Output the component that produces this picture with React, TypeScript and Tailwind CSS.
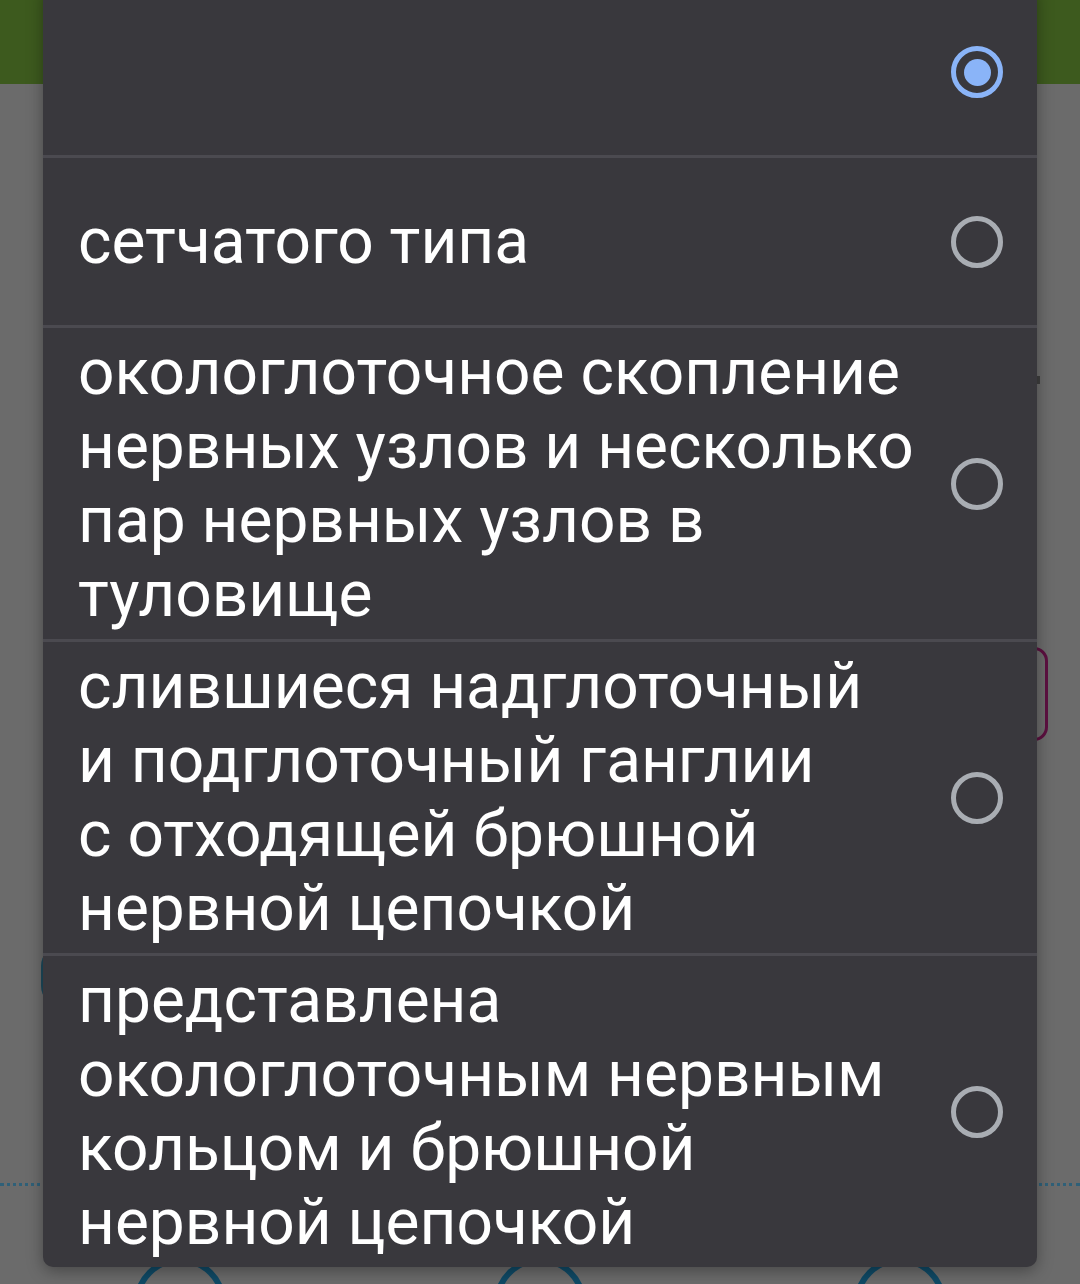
import React from 'react';

type Option = {
  id: number;
  lines: string[];
};

const options: Option[] = [
  { id: 0, lines: [] },
  { id: 1, lines: ['сетчатого типа'] },
  {
    id: 2,
    lines: ['окологлоточное скопление', 'нервных узлов и несколько', 'пар нервных узлов в', 'туловище'],
  },
  {
    id: 3,
    lines: ['слившиеся надглоточный', 'и подглоточный ганглии', 'с отходящей брюшной', 'нервной цепочкой'],
  },
  {
    id: 4,
    lines: ['представлена', 'окологлоточным нервным', 'кольцом и брюшной', 'нервной цепочкой'],
  },
];

const Radio: React.FC<{ checked: boolean }> = ({ checked }) =>
  checked ? (
    <div className="w-[52px] h-[52px] shrink-0 rounded-full border-[5px] border-[#8ab4f8] flex items-center justify-center">
      <div className="w-[27px] h-[27px] rounded-full bg-[#8ab4f8]" />
    </div>
  ) : (
    <div className="w-[52px] h-[52px] shrink-0 rounded-full border-[5px] border-[#a9adb3]" />
  );

const App: React.FC = () => {
  const selected = 0;

  return (
    <div className="relative w-[1080px] h-[1284px] overflow-hidden bg-[#6b6b6b] font-['Roboto',sans-serif]">
      {/* Page behind the dialog (dimmed) */}
      <div className="h-[84px] bg-[#3d5a1e]" />
      <div className="h-[292px]" />
      <div className="h-[8px] w-[5px] ml-[1035px] bg-[#3f3f3f]" />
      <div className="h-[263px]" />
      <div className="h-[94px] ml-[60px] mr-[32px] rounded-[14px] border-[3px] border-[#5c1040]" />
      <div className="h-[205px]" />
      <div className="h-[60px] w-[120px] ml-[41px] rounded-[20px] border-l-[3px] border-[#1d4a5c]" />
      <div className="h-[177px]" />
      <div className="h-0 border-t-[3px] border-dotted border-[#2f6078]" />
      <div className="h-[71px]" />
      <div className="flex justify-around">
        {[0, 1, 2].map((i) => (
          <div key={i} className="w-[92px] h-[92px] rounded-full border-[6px] border-[#0f4a66]" />
        ))}
      </div>

      {/* Dialog */}
      <div className="absolute left-[43px] top-[-12px] w-[994px] bg-[#39383d] rounded-b-[10px] shadow-[0_4px_16px_rgba(0,0,0,0.35)] overflow-hidden">
        {options.map((opt, idx) => (
          <div
            key={opt.id}
            className={`flex items-center pl-[35px] pr-[34px] pt-[8px] pb-[7px] ${
              idx > 0 ? 'border-t-[3px] border-[#4b4a50] min-h-[170px]' : 'min-h-[167px]'
            }`}
          >
            <div className="flex-1 text-white text-[64px] leading-[74px]">
              {opt.lines.map((l, i) => (
                <div key={i} className="whitespace-nowrap">
                  {l}
                </div>
              ))}
            </div>
            <Radio checked={opt.id === selected} />
          </div>
        ))}
      </div>
    </div>
  );
};

export default App;
